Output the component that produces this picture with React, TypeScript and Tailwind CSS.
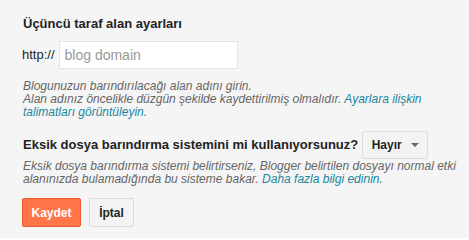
export default function App() {
  return (
    <div className="w-[469px] h-[238px] bg-[#f5f5f5] text-[#222] font-['Liberation_Sans',Arial,sans-serif] pl-[23px] pt-[14px]">
      <h2 className="text-[13px] font-bold leading-[20px]">Üçüncü taraf alan ayarları</h2>

      <div className="flex items-center mt-[7px] -ml-[1px]">
        <span className="text-[13px] text-[#222] mr-[4px]">http://</span>
        <input
          className="w-[179px] h-[28px] bg-white border border-[#e5e5e5] px-[5px] text-[14px] text-[#222] placeholder:text-[#999] outline-none"
          placeholder="blog domain"
        />
      </div>

      <p className="mt-[11px] text-[12px] leading-[13px] italic text-[#666] pr-[12px]">
        Blogunuzun barındırılacağı alan adını girin.
        <br />
        Alan adınız öncelikle düzgün şekilde kaydettirilmiş olmalıdır.{' '}
        <a className="text-[#20879f]" href="#">Ayarlara ilişkin talimatları görüntüleyin.</a>
      </p>

      <div className="flex items-center mt-[12px]">
        <h2 className="text-[13px] font-bold">Eksik dosya barındırma sistemini mi kullanıyorsunuz?</h2>
        <button className="ml-[4px] h-[28px] w-[66px] flex items-center justify-center gap-[9px] border border-[#dcdcdc] rounded-[2px] bg-[#f3f3f3] text-[12px] font-bold text-[#222]">
          Hayır
          <svg width="8" height="4" viewBox="0 0 8 4">
            <path d="M0 0h8L4 4z" fill="#666" />
          </svg>
        </button>
      </div>

      <p className="mt-[1px] text-[12px] leading-[13px] italic text-[#666] pr-[12px]">
        Eksik dosya barındırma sistemi belirtirseniz, Blogger belirtilen dosyayı normal etki alanınızda bulamadığında bu sisteme bakar.{' '}
        <a className="text-[#20879f]" href="#">Daha fazla bilgi edinin.</a>
      </p>

      <div className="flex gap-[8px] mt-[12px] -ml-[1px]">
        <button className="h-[29px] w-[59px] bg-[#ff7548] border border-[#f0592a] rounded-[2px] text-white text-[12px] font-bold">
          Kaydet
        </button>
        <button className="h-[29px] w-[45px] bg-[#f3f3f3] border border-[#dcdcdc] rounded-[2px] text-[#222] text-[12px] font-bold">
          İptal
        </button>
      </div>
    </div>
  );
}
